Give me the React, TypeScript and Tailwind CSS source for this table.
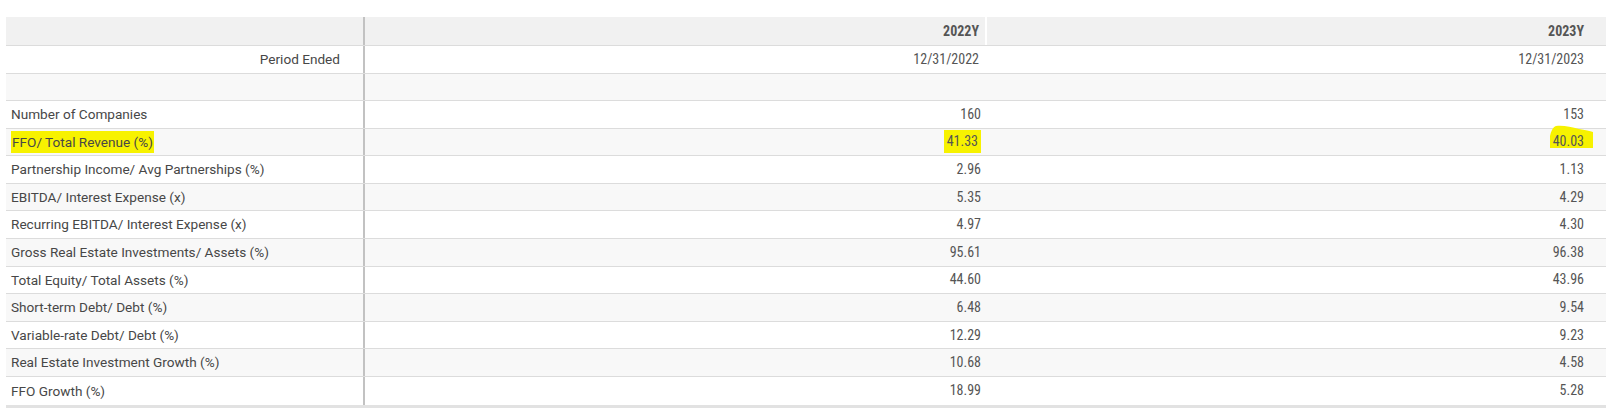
import React from "react";

type Row = {
  label: string;
  y2022: string;
  y2023: string;
  mark?: boolean;
};

const rows: Row[] = [
  { label: "Number of Companies", y2022: "160", y2023: "153" },
  { label: "FFO/ Total Revenue (%)", y2022: "41.33", y2023: "40.03", mark: true },
  { label: "Partnership Income/ Avg Partnerships (%)", y2022: "2.96", y2023: "1.13" },
  { label: "EBITDA/ Interest Expense (x)", y2022: "5.35", y2023: "4.29" },
  { label: "Recurring EBITDA/ Interest Expense (x)", y2022: "4.97", y2023: "4.30" },
  { label: "Gross Real Estate Investments/ Assets (%)", y2022: "95.61", y2023: "96.38" },
  { label: "Total Equity/ Total Assets (%)", y2022: "44.60", y2023: "43.96" },
  { label: "Short-term Debt/ Debt (%)", y2022: "6.48", y2023: "9.54" },
  { label: "Variable-rate Debt/ Debt (%)", y2022: "12.29", y2023: "9.23" },
  { label: "Real Estate Investment Growth (%)", y2022: "10.68", y2023: "4.58" },
  { label: "FFO Growth (%)", y2022: "18.99", y2023: "5.28" },
];

const labelFont = "font-['Roboto',sans-serif] text-[13.6px] text-[#474747]";
const numFont =
  "font-['Liberation_Sans_Narrow','Roboto_Condensed','Roboto',sans-serif] text-[14px] text-[#555]";

// the hand-drawn marker stroke behind 40.03
function Scribble() {
  return (
    <span className="relative inline-block">
      <svg
        className="absolute -left-[4px] -top-[8px] h-[28px] w-[46px]"
        viewBox="0 0 46 28"
      >
        <path
          d="M1 13 C2 8 4 4 7 3 C14 2 22 4 30 6 C36 7 41 8 44 9 L44 25 L1 25 Z"
          fill="#f7f200"
        />
      </svg>
      <span className="relative">40.03</span>
    </span>
  );
}

export default function App() {
  return (
    <main className="min-h-screen bg-white pl-[6px] pr-[9px] pt-[17px]">
      <div className="border-b-[3px] border-[#e2e2e2]">
        {/* header */}
        <div className="grid h-[29px] grid-cols-[359px_622px_1fr] border-b border-[#dcdcdc] bg-[#f1f1f1]">
          <div className="border-r-2 border-[#c2c2c2]" />
          <div className="flex items-center justify-end border-r-2 border-white pr-[6px]">
            <span className={`${numFont} font-bold text-[#222]`}>2022Y</span>
          </div>
          <div className="flex items-center justify-end pr-[22px]">
            <span className={`${numFont} font-bold text-[#222]`}>2023Y</span>
          </div>
        </div>

        {/* period ended */}
        <div className="grid h-[28px] grid-cols-[359px_622px_1fr] border-b border-[#dcdcdc] bg-white">
          <div className="flex items-center justify-end border-r-2 border-[#c2c2c2] pr-[23px]">
            <span className={labelFont}>Period Ended</span>
          </div>
          <div className="flex items-center justify-end pr-[8px]">
            <span className={numFont}>12/31/2022</span>
          </div>
          <div className="flex items-center justify-end pr-[22px]">
            <span className={numFont}>12/31/2023</span>
          </div>
        </div>

        {/* spacer */}
        <div className="grid h-[27px] grid-cols-[359px_622px_1fr] border-b border-[#dcdcdc] bg-[#f8f8f8]">
          <div className="border-r-2 border-[#c2c2c2]" />
          <div />
          <div />
        </div>

        {rows.map((r, i) => (
          <div
            key={r.label}
            className={`grid h-[27.6px] grid-cols-[359px_622px_1fr] ${
              i < rows.length - 1 ? "border-b border-[#dcdcdc]" : ""
            } ${i % 2 === 0 ? "bg-white" : "bg-[#f8f8f8]"}`}
          >
            <div className="flex items-center border-r-2 border-[#c2c2c2] pl-[5px]">
              <span
                className={`${labelFont} ${r.mark ? "bg-[#f7f200] px-[1px] py-[1px]" : ""}`}
              >
                {r.label}
              </span>
            </div>
            <div className="flex items-center justify-end pr-[6px]">
              <span className={`${numFont} ${r.mark ? "bg-[#f7f200] px-[3px] py-[1px]" : ""}`}>
                {r.y2022}
              </span>
            </div>
            <div className="flex items-center justify-end pr-[22px]">
              <span className={numFont}>{r.mark ? <Scribble /> : r.y2023}</span>
            </div>
          </div>
        ))}
      </div>
    </main>
  );
}
